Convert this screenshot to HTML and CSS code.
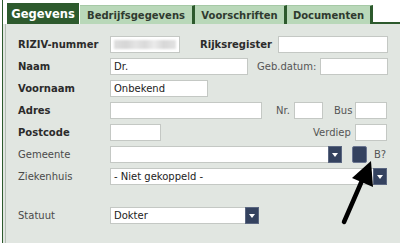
FILE: index.html
```html
<!DOCTYPE html>
<html lang="nl">
<head>
    <meta charset="UTF-8">
    <title>Gegevens</title>
    <link rel="stylesheet" href="styles.css">
</head>
<body>
    <div class="frame">
        <div class="tabs">
            <div class="tab active">Gegevens</div>
            <div class="tab tab-bedrijf">Bedrijfsgegevens</div>
            <div class="tab tab-voorschr">Voorschriften</div>
            <div class="tab tab-docs">Documenten</div>
            <div class="tab-fill"></div>
        </div>

        <div class="panel">
            <div class="fields">
                <div class="row">
                    <span class="lbl strong">RIZIV-nummer</span>
                    <div class="field w70"><div class="blurred"></div></div>
                    <span class="lbl strong lbl-rijks">Rijksregister</span>
                    <div class="field w110"></div>
                </div>
                <div class="row">
                    <span class="lbl strong">Naam</span>
                    <div class="field w138">Dr.</div>
                    <span class="lbl lbl-geb">Geb.datum:</span>
                    <div class="field w68"></div>
                </div>
                <div class="row">
                    <span class="lbl strong">Voornaam</span>
                    <div class="field w98">Onbekend</div>
                </div>
                <div class="row">
                    <span class="lbl strong">Adres</span>
                    <div class="field w152"></div>
                    <span class="lbl lbl-nr">Nr.</span>
                    <div class="field w29"></div>
                    <span class="lbl lbl-bus">Bus</span>
                    <div class="field w32"></div>
                </div>
                <div class="row">
                    <span class="lbl strong">Postcode</span>
                    <div class="field w51"></div>
                    <span class="lbl lbl-verdiep">Verdiep</span>
                    <div class="field w32"></div>
                </div>
                <div class="row">
                    <span class="lbl">Gemeente</span>
                    <div class="select w232"><span class="sel-text"></span><span class="sel-btn"></span></div>
                    <span class="square-btn"></span>
                    <span class="lbl lbl-b">B?</span>
                </div>
                <div class="row">
                    <span class="lbl">Ziekenhuis</span>
                    <div class="select w277"><span class="sel-text">- Niet gekoppeld -</span><span class="sel-btn"></span></div>
                </div>
                <div class="row row-statuut">
                    <span class="lbl">Statuut</span>
                    <div class="select w149"><span class="sel-text">Dokter</span><span class="sel-btn"></span></div>
                </div>
            </div>
        </div>
    </div>

    <!-- annotation arrow on top of the form -->
    <svg class="pointer" width="400" height="243" viewBox="0 0 400 243">
        <line x1="344" y1="222" x2="364" y2="176" stroke="#000" stroke-width="4.5" stroke-linecap="round"/>
        <polygon points="371,161 352,178 373,187" fill="#000"/>
    </svg>
</body>
</html>
```

FILE: styles.css
```css
body {
    margin: 0;
    background: #fff;
    font-family: "DejaVu Sans", Verdana, sans-serif;
    font-size: 10px;
    color: #2b2b2b;
    overflow: hidden;
}

.frame {
    margin-left: 2px;
    border-left: 1px solid #2d5a2d;
    height: 243px;
    display: flex;
    flex-direction: column;
}

/* tabs */
.tabs {
    display: flex;
    align-items: flex-end;
    height: 24px;
    padding-left: 4px;
}

.tab {
    box-sizing: border-box;
    height: 19px;
    background: #b9d8b9;
    border-top: 1px solid #a6c9a6;
    border-right: 3px solid #2d5a2d;
    color: #2f3a2f;
    font-weight: bold;
    font-size: 10px;
    display: flex;
    align-items: center;
    justify-content: center;
}

.tab.active {
    width: 72px;
    height: 21px;
    margin-right: 1px;
    background: #2d5a2d;
    border: none;
    color: #fff;
    font-size: 11.5px;
}

.tab-bedrijf { width: 115px; }
.tab-voorschr { width: 92px; }
.tab-docs { width: 86px; }

.tab-fill {
    flex: 1;
    align-self: stretch;
    border-bottom: 2px solid #2d5a2d;
}

/* panel */
.panel {
    flex: 1;
    background: #e1e6e1;
    padding-left: 2px;
    display: flex;
}

.fields {
    flex: 1;
    border-left: 1px solid #b3bdb3;
    padding: 12px 0 0 12px;
}

.row {
    display: flex;
    align-items: center;
    height: 17px;
    margin-bottom: 5px;
}

.row-statuut {
    margin-top: 22px;
}

.lbl {
    flex: none;
    width: 92px;
    color: #4a4a4a;
    white-space: nowrap;
}

.lbl.strong {
    font-weight: bold;
    color: #2b2b2b;
}

.lbl-rijks { width: 78px; margin-left: 20px; }
.lbl-geb { width: 63px; margin-left: 9px; color: #555; }
.lbl-nr { width: 18px; margin-left: 14px; color: #555; }
.lbl-bus { width: 21px; margin-left: 11px; color: #555; }
.lbl-verdiep { width: 42px; margin-left: 152px; color: #555; }
.lbl-b { width: auto; margin-left: 7px; color: #555; }

.field {
    flex: none;
    box-sizing: border-box;
    height: 17px;
    background: #fff;
    border: 1px solid #c4c8c4;
    padding: 0 3px;
    line-height: 15px;
    color: #222;
    position: relative;
}

.w29 { width: 29px; }
.w32 { width: 32px; }
.w51 { width: 51px; }
.w68 { width: 68px; }
.w70 { width: 70px; }
.w98 { width: 98px; }
.w110 { width: 110px; }
.w138 { width: 138px; }
.w149 { width: 149px; }
.w152 { width: 152px; }
.w232 { width: 232px; }
.w277 { width: 277px; }

.blurred {
    position: absolute;
    left: 3px;
    top: 3px;
    width: 62px;
    height: 9px;
    background: linear-gradient(90deg, #dedede 0, #d6d6d6 20%, #e4e4e4 35%, #d9d9d9 50%, #ebebeb 65%, #d7d7d7 80%, #e2e2e2 100%);
    filter: blur(1px);
}

/* selects */
.select {
    flex: none;
    box-sizing: border-box;
    height: 17px;
    background: #fff;
    border: 1px solid #c4c8c4;
    display: flex;
    color: #222;
}

.sel-text {
    flex: 1;
    padding-left: 3px;
    line-height: 15px;
    white-space: nowrap;
}

.sel-btn {
    width: 14px;
    background: #34425f;
    border: 1px solid #5a6680;
    box-sizing: border-box;
    margin: -1px -1px -1px 0;
    height: 17px;
    position: relative;
}

.sel-btn::after {
    content: "";
    position: absolute;
    left: 3px;
    top: 6px;
    border-left: 3px solid transparent;
    border-right: 3px solid transparent;
    border-top: 4px solid #fff;
}

.square-btn {
    flex: none;
    width: 15px;
    height: 17px;
    box-sizing: border-box;
    margin-left: 10px;
    background: #34425f;
    border: 1px solid #6a7590;
    border-radius: 2px;
}

.pointer {
    position: absolute;
    left: 0;
    top: 0;
    pointer-events: none;
}
```
